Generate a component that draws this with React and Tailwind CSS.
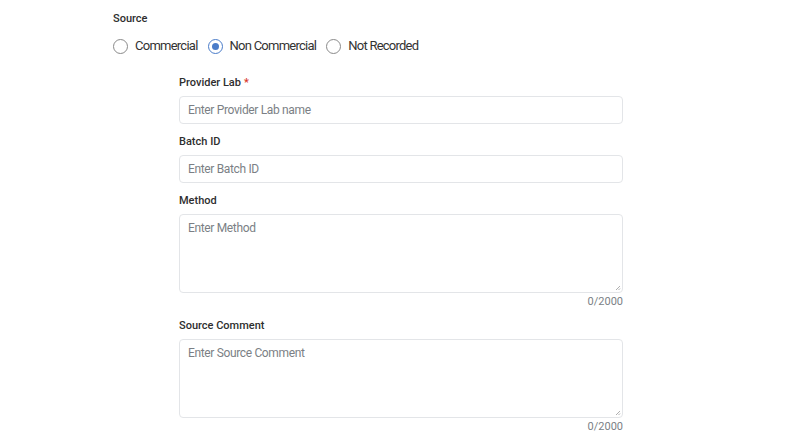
import React from "react";

function Radio({ checked, label }) {
  return (
    <label className="flex items-center gap-[7px]">
      {checked ? (
        <span className="w-[15px] h-[15px] rounded-full border-[1.5px] border-[#4a7cc9] flex items-center justify-center">
          <span className="w-[7px] h-[7px] rounded-full bg-[#4a7cc9]" />
        </span>
      ) : (
        <span className="w-[15px] h-[15px] rounded-full border-[1.5px] border-[#8a8a8a]" />
      )}
      <span className="text-[13px] leading-[16px] tracking-[-0.75px] text-[#333]">{label}</span>
    </label>
  );
}

function Label({ children }) {
  return <div className="text-[11px] font-medium text-[#2e2e2e] leading-[16px] h-[16px]">{children}</div>;
}

function Field({ label, required, placeholder }) {
  return (
    <div className="flex flex-col">
      <Label>
        {label}
        {required && <span className="text-[#d9362b] ml-[3px]">*</span>}
      </Label>
      <div className="mt-[5px] h-[28px] border border-[#e3e5e8] rounded-[4px] flex items-center px-[8px] text-[12px] tracking-[-0.35px] text-[#7b7f85]">
        {placeholder}
      </div>
    </div>
  );
}

function Area({ label, placeholder }) {
  return (
    <div className="flex flex-col">
      <Label>{label}</Label>
      <div className="relative mt-[5px] h-[79px] border border-[#e3e5e8] rounded-[4px] px-[8px] pt-[5px] text-[12px] tracking-[-0.35px] leading-[16px] text-[#7b7f85]">
        {placeholder}
        <svg className="absolute right-[1px] bottom-[1px]" width="7" height="7" viewBox="0 0 7 7">
          <path d="M6 2 L2 6 M6 4.5 L4.5 6" stroke="#9a9a9a" strokeWidth="0.8" />
        </svg>
      </div>
      <div className="text-right text-[11px] text-[#7b7f85] leading-[14px] mt-[2px]">0/2000</div>
    </div>
  );
}

export default function App() {
  return (
    <div className="w-[800px] h-[441px] bg-white overflow-hidden" style={{ fontFamily: "Roboto, 'Noto Sans', sans-serif" }}>
      <div className="pl-[113px] pt-[11px]">
        <Label>Source</Label>
        <div className="flex items-center gap-[10px] mt-[11px]">
          <Radio label="Commercial" />
          <Radio checked label="Non Commercial" />
          <Radio label="Not Recorded" />
        </div>
      </div>
      <div className="ml-[179px] w-[444px] mt-[21px] flex flex-col">
        <Field label="Provider Lab" required placeholder="Enter Provider Lab name" />
        <div className="mt-[10px]">
          <Field label="Batch ID" placeholder="Enter Batch ID" />
        </div>
        <div className="mt-[10px]">
          <Area label="Method" placeholder="Enter Method" />
        </div>
        <div className="mt-[9px]">
          <Area label="Source Comment" placeholder="Enter Source Comment" />
        </div>
      </div>
    </div>
  );
}
